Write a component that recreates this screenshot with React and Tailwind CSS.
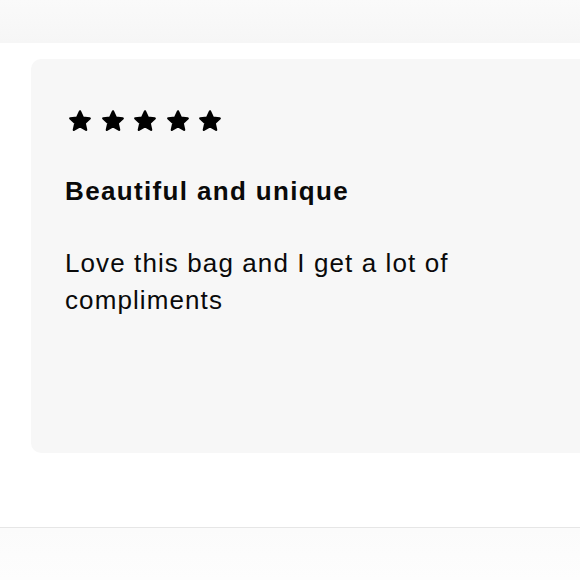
import React from "react";

function Star() {
  return (
    <svg width="24" height="24" viewBox="0 0 24 24" className="block">
      <polygon
        points="12,2.4 14.9,8.7 21.7,9.4 16.6,14 18.1,20.8 12,17.3 5.9,20.8 7.4,14 2.3,9.4 9.1,8.7"
        fill="#000"
        stroke="#000"
        strokeWidth="2.4"
        strokeLinejoin="round"
      />
    </svg>
  );
}

export default function App() {
  return (
    <div
      className="w-[580px] h-[580px] overflow-hidden bg-white flex flex-col"
      style={{ fontFamily: '"Liberation Sans", Arial, sans-serif' }}
    >
      <div className="h-[43px] shrink-0 bg-gradient-to-b from-[#fafafa] to-[#f6f6f6]" />
      <div className="mt-[16px] ml-[31px] w-[620px] h-[394px] shrink-0 rounded-[10px] bg-[#f7f7f7] pt-[50px] pl-[37px]">
        <div className="flex gap-[8.5px]">
          <Star />
          <Star />
          <Star />
          <Star />
          <Star />
        </div>
        <h2 className="mt-[42px] -ml-[3px] text-[26px] leading-[32px] font-bold tracking-[1.35px] text-[#0a0a0a]">
          Beautiful and unique
        </h2>
        <p className="mt-[38px] -ml-[3px] w-[430px] text-[26px] leading-[37px] tracking-[1.1px] text-[#0a0a0a]">
          Love this bag and I get a lot of compliments
        </p>
      </div>
      <div className="mt-[74px] shrink-0 h-px bg-[#e6e6e6]" />
      <div className="flex-1 bg-gradient-to-b from-[#fbfbfb] to-[#fdfdfd]" />
    </div>
  );
}
